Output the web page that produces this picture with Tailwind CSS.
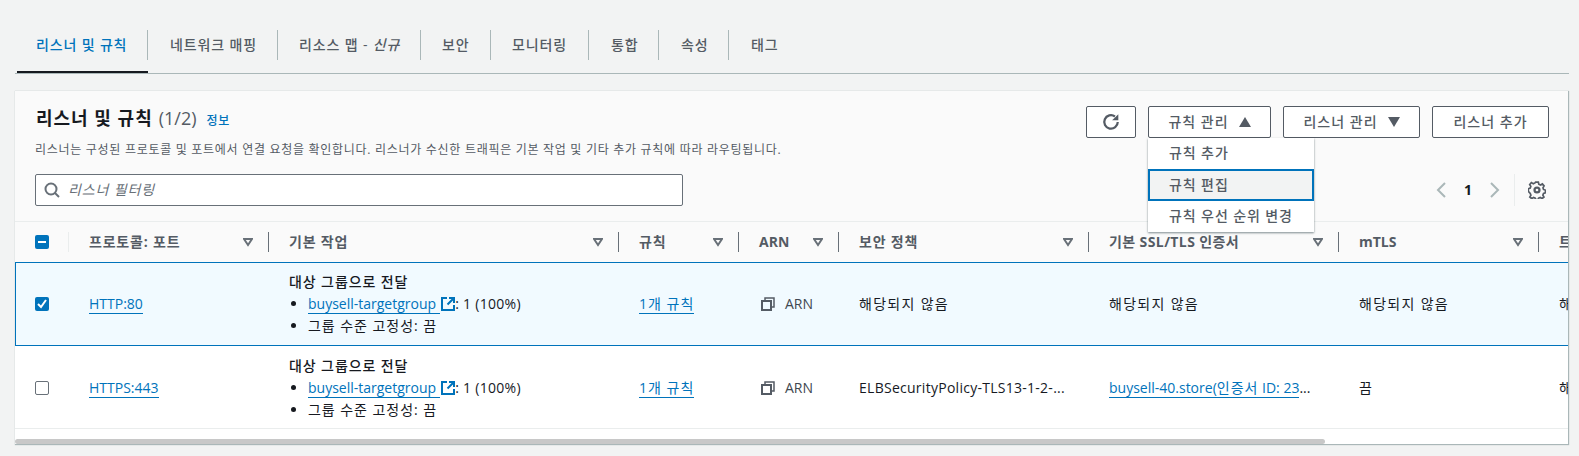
<!DOCTYPE html>
<html lang="ko">

<head>
    <meta charset="UTF-8">
    <title>리스너 및 규칙</title>
    <script src="https://cdn.jsdelivr.net/npm/@tailwindcss/browser@4"></script>
</head>

<body class="bg-[#f2f3f3] h-[456px] overflow-hidden font-['Open_Sans','Noto_Sans_CJK_KR',sans-serif] text-[14px] leading-[22px] text-[#16191f]">
    <div class="ml-[15px] w-[1554px]">

        <!-- tabs -->
        <div class="flex items-start box-content border-b border-[#aab7b8] h-[43px] pt-[30px] tracking-[0.85px] whitespace-nowrap">
            <div class="w-[131px] h-[43px] -mb-px border-b-2 border-[#16191f] ml-[2px] flex"><span class="w-[131px] h-[30px] flex items-center pl-[19px] text-[#0073bb] font-medium border-r border-[#aab7b8]">리스너 및 규칙</span></div>
            <span class="w-[130px] h-[30px] flex items-center pl-[22px] text-[#545b64] font-medium border-r border-[#aab7b8]">네트워크 매핑</span>
            <span class="w-[143px] h-[30px] flex items-center pl-[21px] text-[#545b64] font-medium border-r border-[#aab7b8]">리소스 맵 -&nbsp;<i>신규</i></span>
            <span class="w-[70px] h-[30px] flex items-center pl-[21px] text-[#545b64] font-medium border-r border-[#aab7b8]">보안</span>
            <span class="w-[98px] h-[30px] flex items-center pl-[21px] text-[#545b64] font-medium border-r border-[#aab7b8]">모니터링</span>
            <span class="w-[70px] h-[30px] flex items-center pl-[22px] text-[#545b64] font-medium border-r border-[#aab7b8]">통합</span>
            <span class="w-[70px] h-[30px] flex items-center pl-[22px] text-[#545b64] font-medium border-r border-[#aab7b8]">속성</span>
            <span class="h-[30px] flex items-center pl-[22px] text-[#545b64] font-medium">태그</span>
        </div>

        <!-- card -->
        <div class="relative mt-[17px] h-[354px] bg-white border-r border-b border-[#aab7b8] shadow-[0_0_1px_#aab7b8] overflow-hidden">
            <div class="bg-[#fafafa] h-[131px] border-b border-[#eaeded] px-5 pt-[15px] flex justify-between">
                <div class="pl-[1px]">
                    <div class="flex items-baseline h-[24px] mt-[1px]">
                        <h2 class="text-[18px] font-bold tracking-[1px]">리스너 및 규칙</h2>
                        <span class="ml-[6px] text-[18px] text-[#545b64]">(1/2)</span>
                        <span class="ml-[10px] text-[12px] text-[#0073bb] font-medium tracking-[0.6px]">정보</span>
                    </div>
                    <p class="mt-[10px] -ml-[1px] text-[12px] leading-[18px] text-[#545b64] tracking-[0.71px] whitespace-nowrap">리스너는 구성된 프로토콜 및 포트에서 연결 요청을 확인합니다. 리스너가 수신한 트래픽은 기본 작업 및 기타 추가 규칙에 따라 라우팅됩니다.</p>
                    <div class="mt-[15px] -ml-[1px] w-[648px] h-[32px] bg-white border border-[#687078] rounded-[2px] flex items-center pl-[8px]">
                        <svg width="16" height="16" viewBox="0 0 16 16" fill="none" stroke="#687078" stroke-width="2"><circle cx="7" cy="7" r="5.5"/><path d="M11 11l4 4"/></svg>
                        <span class="ml-[8px] italic text-[#687078] tracking-[0.85px]">리스너 필터링</span>
                    </div>
                </div>
                <div class="w-[470px] shrink-0 -mr-[1px]">
                    <div class="flex justify-end gap-3 h-[32px] tracking-[1px]">
                        <button class="w-[50px] border border-[#545b64] rounded-[2px] bg-white flex items-center justify-center">
                            <svg width="18" height="18" viewBox="0 0 16 16" fill="none" stroke="#545b64" stroke-width="2"><path d="M14 8a6 6 0 1 1-2.500-4.900"/><path fill="#545b64" stroke="none" d="M14.500 1v5.500H9z"/></svg>
                        </button>
                        <button class="w-[123px] border border-[#545b64] rounded-[2px] bg-white text-[#545b64] font-medium flex items-center justify-center gap-[10px]">규칙 관리
                            <svg width="12" height="10" viewBox="0 0 12 10" fill="#545b64"><path d="M6 0l6 10H0z"/></svg>
                        </button>
                        <button class="w-[137px] border border-[#545b64] rounded-[2px] bg-white text-[#545b64] font-medium flex items-center justify-center gap-[10px]">리스너 관리
                            <svg width="12" height="10" viewBox="0 0 12 10" fill="#545b64"><path d="M0 0h12L6 10z"/></svg>
                        </button>
                        <button class="w-[117px] border border-[#545b64] rounded-[2px] bg-white text-[#545b64] font-medium">리스너 추가</button>
                    </div>
                    <div class="mt-[36px] flex justify-end items-center h-[32px] pr-[3px] text-[#16191f]">
                        <svg width="16" height="16" viewBox="0 0 16 16" fill="none" stroke="#aab7b8" stroke-width="2"><path d="M11 1L4 8l7 7"/></svg>
                        <span class="mx-[14px] font-bold">1</span>
                        <svg width="16" height="16" viewBox="0 0 16 16" fill="none" stroke="#aab7b8" stroke-width="2"><path d="M5 1l7 7-7 7"/></svg>
                        <span class="ml-[12px] h-[32px] border-l border-[#eaeded]"></span>
                        <svg class="ml-[13px]" width="18" height="18" viewBox="0 0 16 16" fill="none" stroke="#545b64"><circle cx="8" cy="8" r="2.200" stroke-width="2"/><path d="M6.800 1h2.400l.4 1.900 1.500.7 1.700-1 1.500 1.700-1 1.700.5 1.500 1.700.6v2.300l-1.700.6-.6 1.500 1 1.700-1.700 1.500-1.600-1-1.500.6-.4 1.200H6.800l-.4-1.200-1.500-.6-1.600 1-1.700-1.500 1-1.700-.6-1.500L.3 9.200V6.900L2 6.300l.5-1.500-1-1.700L3 1.400l1.700 1 1.500-.7z" stroke-width="1.500"/></svg>
                    </div>
                </div>
            </div>

            <!-- table header -->
            <div class="grid grid-cols-[54px_200px_350px_120px_100px_250px_250px_200px_100px] h-[40px] bg-[#fafafa] items-center font-bold text-[#545b64] whitespace-nowrap">
                <div class="h-[20px] flex items-center pl-[20px] border-r border-[#eaeded]">
                    <span class="w-[14px] h-[14px] rounded-[2px] bg-[#0073bb] flex items-center justify-center"><span class="w-[8px] h-[2px] bg-white"></span></span>
                </div>
                <div class="h-[20px] flex items-center justify-between pl-5 pr-[15px] border-r border-[#687078]"><span class="tracking-[0.8px]">프로토콜: 포트</span>
                    <svg width="10" height="9" viewBox="0 0 10 9" fill="none" stroke="#687078" stroke-width="2"><path d="M1 1h8L5 7z"/></svg></div>
                <div class="h-[20px] flex items-center justify-between pl-5 pr-[15px] border-r border-[#687078]"><span class="tracking-[0.8px]">기본 작업</span>
                    <svg width="10" height="9" viewBox="0 0 10 9" fill="none" stroke="#687078" stroke-width="2"><path d="M1 1h8L5 7z"/></svg></div>
                <div class="h-[20px] flex items-center justify-between pl-5 pr-[15px] border-r border-[#687078]"><span class="tracking-[0.8px]">규칙</span>
                    <svg width="10" height="9" viewBox="0 0 10 9" fill="none" stroke="#687078" stroke-width="2"><path d="M1 1h8L5 7z"/></svg></div>
                <div class="h-[20px] flex items-center justify-between pl-5 pr-[15px] border-r border-[#687078]">ARN
                    <svg width="10" height="9" viewBox="0 0 10 9" fill="none" stroke="#687078" stroke-width="2"><path d="M1 1h8L5 7z"/></svg></div>
                <div class="h-[20px] flex items-center justify-between pl-5 pr-[15px] border-r border-[#687078]"><span class="tracking-[0.8px]">보안 정책</span>
                    <svg width="10" height="9" viewBox="0 0 10 9" fill="none" stroke="#687078" stroke-width="2"><path d="M1 1h8L5 7z"/></svg></div>
                <div class="h-[20px] flex items-center justify-between pl-5 pr-[15px] border-r border-[#687078]"><span class="tracking-[0.4px]">기본 SSL/TLS 인증서</span>
                    <svg width="10" height="9" viewBox="0 0 10 9" fill="none" stroke="#687078" stroke-width="2"><path d="M1 1h8L5 7z"/></svg></div>
                <div class="h-[20px] flex items-center justify-between pl-5 pr-[15px] border-r border-[#687078]">mTLS
                    <svg width="10" height="9" viewBox="0 0 10 9" fill="none" stroke="#687078" stroke-width="2"><path d="M1 1h8L5 7z"/></svg></div>
                <div class="h-[20px] flex items-center pl-5">트래픽</div>
            </div>

            <!-- row 1 -->
            <div class="grid grid-cols-[53px_200px_350px_120px_100px_250px_250px_200px_100px] h-[84px] items-center bg-[#f1faff] border-y border-l border-[#0073bb] whitespace-nowrap">
                <div class="pl-[19px]">
                    <span class="w-[14px] h-[14px] rounded-[2px] bg-[#0073bb] flex items-center justify-center">
                        <svg width="10" height="10" viewBox="0 0 10 10" fill="none" stroke="white" stroke-width="2"><path d="M1 5l3 3 5-7"/></svg>
                    </span>
                </div>
                <div class="pl-5"><a class="text-[#0073bb] border-b border-[#0073bb] inline-block leading-[18px]">HTTP:80</a></div>
                <div class="pl-5">
                    <div class="font-medium tracking-[0.9px]">대상 그룹으로 전달</div>
                    <ul class="list-disc pl-[19px]">
                        <li><a class="text-[#0073bb] border-b border-[#0073bb] pr-[4px]">buysell-targetgroup</a><svg class="inline align-[-2px] ml-[1px]" width="14" height="14" viewBox="0 0 14 14" fill="none" stroke="#0073bb" stroke-width="2"><path d="M6 1H1v12h12V8"/><path d="M13 1L6.500 7.500M8 1h5v5"/></svg><span class="tracking-[0.3px]">: 1 (100%)</span></li>
                        <li class="tracking-[0.95px]">그룹 수준 고정성: 끔</li>
                    </ul>
                </div>
                <div class="pl-5"><a class="text-[#0073bb] border-b border-[#0073bb] inline-block leading-[18px] tracking-[1px]">1개 규칙</a></div>
                <div class="pl-[22px] flex items-center">
                    <svg width="14" height="14" viewBox="0 0 14 14" fill="none" stroke="#545b64" stroke-width="2"><path d="M1 4h9v9H1z"/><path d="M4 4V1h9v9h-3" stroke-width="1.500"/></svg>
                    <span class="ml-[10px] text-[#414750] font-medium">ARN</span>
                </div>
                <div class="pl-5 tracking-[1.3px]">해당되지 않음</div>
                <div class="pl-5 tracking-[1.3px]">해당되지 않음</div>
                <div class="pl-5 tracking-[1.3px]">해당되지 않음</div>
                <div class="pl-5 tracking-[1.3px]">해당되지 않음</div>
            </div>

            <!-- row 2 -->
            <div class="grid grid-cols-[54px_200px_350px_120px_100px_250px_250px_200px_100px] h-[83px] pt-[2px] items-center bg-white border-b border-[#eaeded] whitespace-nowrap">
                <div class="pl-[20px]">
                    <span class="block w-[14px] h-[14px] rounded-[2px] bg-white border border-[#687078]"></span>
                </div>
                <div class="pl-5"><a class="text-[#0073bb] border-b border-[#0073bb] inline-block leading-[18px]">HTTPS:443</a></div>
                <div class="pl-5">
                    <div class="font-medium tracking-[0.9px]">대상 그룹으로 전달</div>
                    <ul class="list-disc pl-[19px]">
                        <li><a class="text-[#0073bb] border-b border-[#0073bb] pr-[4px]">buysell-targetgroup</a><svg class="inline align-[-2px] ml-[1px]" width="14" height="14" viewBox="0 0 14 14" fill="none" stroke="#0073bb" stroke-width="2"><path d="M6 1H1v12h12V8"/><path d="M13 1L6.500 7.500M8 1h5v5"/></svg><span class="tracking-[0.3px]">: 1 (100%)</span></li>
                        <li class="tracking-[0.95px]">그룹 수준 고정성: 끔</li>
                    </ul>
                </div>
                <div class="pl-5"><a class="text-[#0073bb] border-b border-[#0073bb] inline-block leading-[18px] tracking-[1px]">1개 규칙</a></div>
                <div class="pl-[22px] flex items-center">
                    <svg width="14" height="14" viewBox="0 0 14 14" fill="none" stroke="#545b64" stroke-width="2"><path d="M1 4h9v9H1z"/><path d="M4 4V1h9v9h-3" stroke-width="1.500"/></svg>
                    <span class="ml-[10px] text-[#414750] font-medium">ARN</span>
                </div>
                <div class="pl-5 tracking-[0.27px]">ELBSecurityPolicy-TLS13-1-2-...</div>
                <div class="pl-5"><a class="text-[#0073bb] border-b border-[#0073bb] inline-block leading-[18px]">buysell-40.store(<span class="tracking-[1px]">인증서</span> ID: 23</a>...</div>
                <div class="pl-5">끔</div>
                <div class="pl-5 tracking-[1.3px]">해당되지 않음</div>
            </div>

            <!-- scrollbar -->
            <div class="absolute left-0 bottom-0 w-[1310px] h-[5px] rounded-[3px] bg-[#c8c8c8]"></div>

            <!-- dropdown -->
            <div class="absolute left-[1133px] top-[47px] w-[166px] h-[94px] bg-white shadow-[0_1px_2px_rgba(0,28,36,0.5)] text-[#545b64] font-medium tracking-[0.9px] z-10">
                <div class="h-[31px] flex items-center pl-[21px] pb-[1px]">규칙 추가</div>
                <div class="h-[32px] flex items-center pl-[19px] pb-[1px] bg-[#f2f3f3] border-2 border-[#0073bb]">규칙 편집</div>
                <div class="h-[31px] flex items-center pl-[21px] pb-[1px]">규칙 우선 순위 변경</div>
            </div>
        </div>
    </div>
</body>

</html>
